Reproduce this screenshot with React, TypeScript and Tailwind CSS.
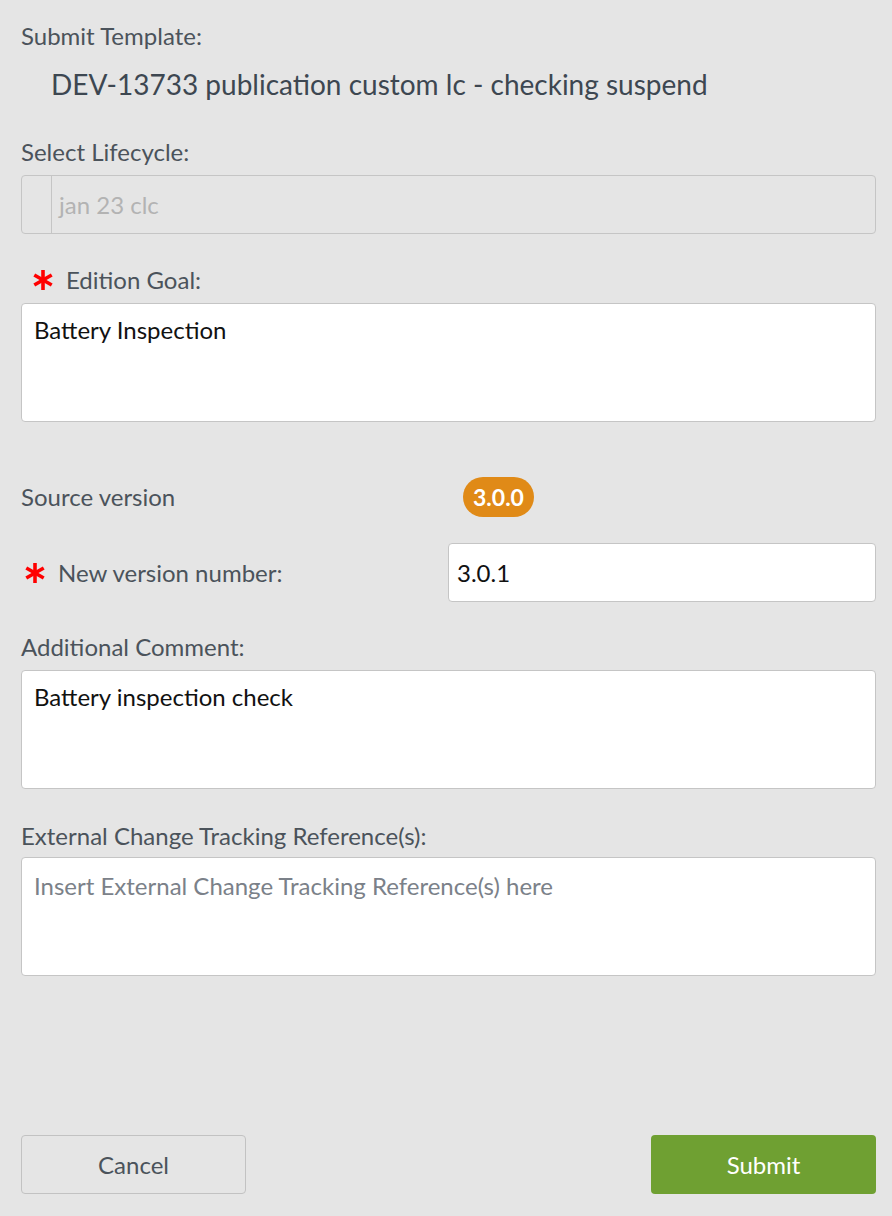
import React from "react";

function Asterisk() {
  return (
    <svg width="22" height="22" viewBox="0 0 22 22" className="shrink-0">
      <g stroke="#ff0000" strokeWidth="3.6" strokeLinecap="butt">
        <line x1="11" y1="1" x2="11" y2="21" />
        <line x1="2.3" y1="6" x2="19.7" y2="16" />
        <line x1="2.3" y1="16" x2="19.7" y2="6" />
      </g>
    </svg>
  );
}

const font = { fontFamily: "Lato, 'Open Sans', sans-serif" };

export default function App() {
  return (
    <div
      className="w-full h-[1216px] bg-[#e5e5e5] pl-[21px] pr-[16px] pt-[22px] pb-[22px] flex flex-col text-[#4b535b]"
      style={font}
    >
      <div className="h-[28px] leading-[28px] text-[24px]">Submit Template:</div>
      <div className="mt-[20px] h-[28px] leading-[28px] text-[28px] pl-[30px] text-[#3d4751]">
        DEV-13733 publication custom lc - checking suspend
      </div>

      <div className="mt-[40px] h-[28px] leading-[28px] text-[24px]">Select Lifecycle:</div>
      <div className="mt-[9px] h-[59px] rounded-[4px] border border-[#c5c5c5] flex">
        <div className="w-[30px] border-r border-[#c5c5c5]" />
        <div className="pl-[7px] flex items-center text-[24px] text-[#b3b3b3]">jan 23 clc</div>
      </div>

      <div className="mt-[32px] h-[28px] flex items-center pl-[11px] gap-[12px]">
        <Asterisk />
        <span className="text-[24px] leading-[28px]">Edition Goal:</span>
      </div>
      <div className="mt-[9px] h-[119px] rounded-[4px] border border-[#c5c5c5] bg-white px-[12px] pt-[12px] text-[24px] leading-[28px] text-[#111]">
        Battery Inspection
      </div>

      <div className="mt-[55px] h-[40px] flex items-center">
        <div className="w-[442px] text-[24px] leading-[28px]">Source version</div>
        <div className="h-[40px] w-[71px] rounded-full bg-[#e08a17] text-white font-bold text-[23px] flex items-center justify-center">
          3.0.0
        </div>
      </div>

      <div className="mt-[26px] h-[59px] flex items-center">
        <div className="w-[427px] flex items-center pl-[3px] gap-[12px]">
          <Asterisk />
          <span className="text-[24px] leading-[28px]">New version number:</span>
        </div>
        <div className="flex-1 h-[59px] rounded-[4px] border border-[#c5c5c5] bg-white px-[8px] flex items-center text-[24px] text-[#111]">
          3.0.1
        </div>
      </div>

      <div className="mt-[31px] h-[28px] leading-[28px] text-[24px]">Additional Comment:</div>
      <div className="mt-[9px] h-[119px] rounded-[4px] border border-[#c5c5c5] bg-white px-[12px] pt-[12px] text-[24px] leading-[28px] text-[#111]">
        Battery inspection check
      </div>

      <div className="mt-[33px] h-[28px] leading-[28px] text-[24px]">External Change Tracking Reference(s):</div>
      <div className="mt-[7px] h-[119px] rounded-[4px] border border-[#c5c5c5] bg-white px-[12px] pt-[14px] text-[24px] leading-[28px] text-[#7b8189]">
        Insert External Change Tracking Reference(s) here
      </div>

      <div className="mt-auto flex justify-between">
        <button className="w-[225px] h-[59px] rounded-[4px] border border-[#c2c2c2] bg-[#e5e5e5] text-[24px] text-[#4b535b]">
          Cancel
        </button>
        <button className="w-[225px] h-[59px] rounded-[4px] bg-[#6fa032] text-[24px] text-white">
          Submit
        </button>
      </div>
    </div>
  );
}
